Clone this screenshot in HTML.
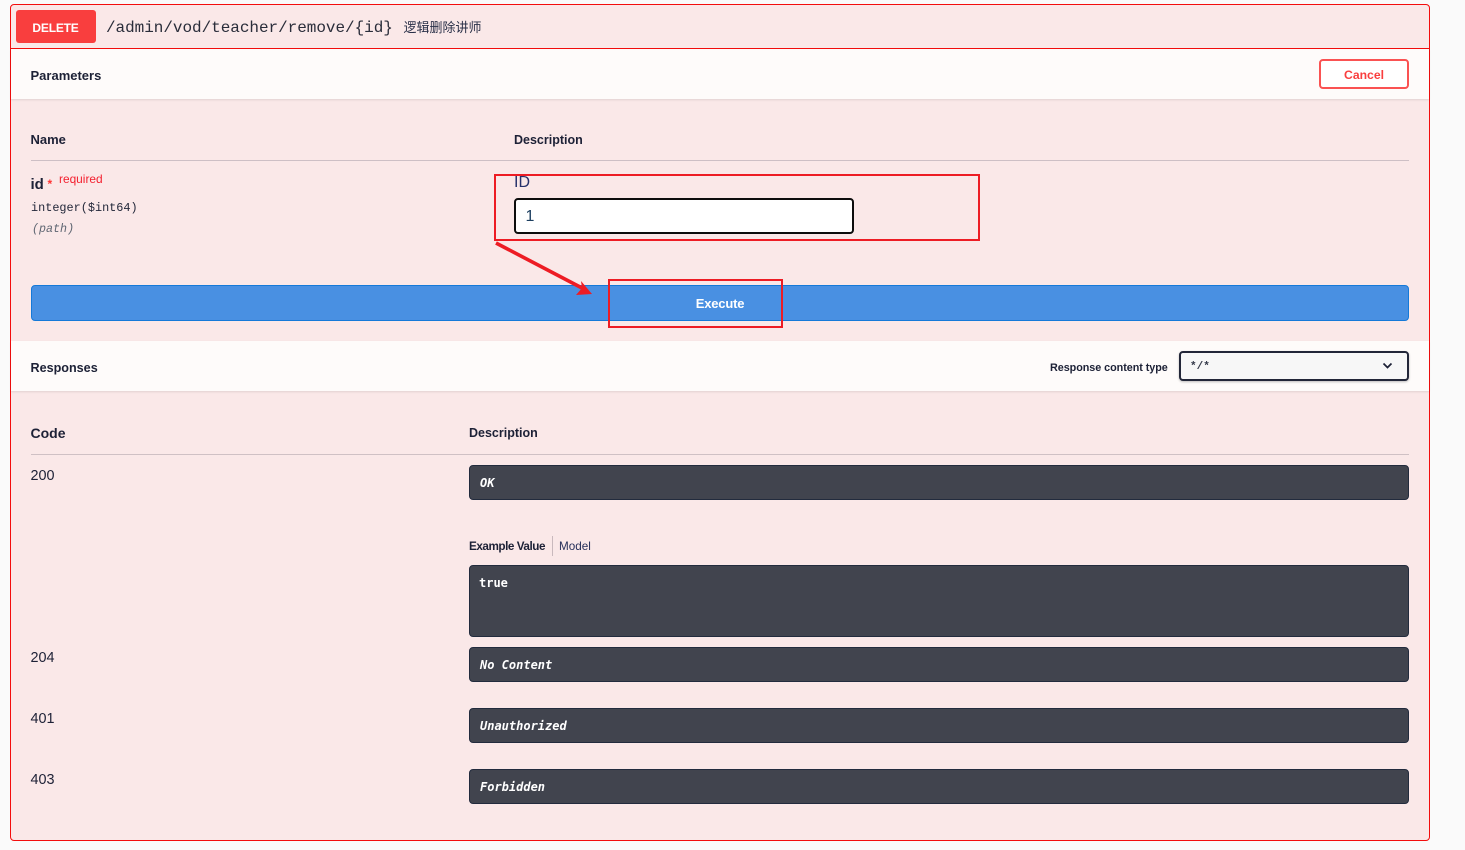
<!DOCTYPE html>
<html><head><meta charset="utf-8"><style>
html,body{margin:0;padding:0;width:1465px;height:850px;overflow:hidden;background:#fafafa}
body{position:relative;font-family:"Liberation Sans","Noto Sans CJK SC",sans-serif;color:#1b1f33}
.a{position:absolute;box-sizing:border-box;white-space:nowrap}
.t{position:absolute;white-space:nowrap;line-height:16px}
.b{font-weight:bold;font-size:12.5px;color:#1d2136}
.m{font-family:"Liberation Mono",monospace}
.dark{position:absolute;box-sizing:border-box;left:469px;width:940px;background:#41444e;border:1px solid #222b3d;border-radius:4px}
.dt{position:absolute;left:480px;font-family:"DejaVu Sans Mono","Liberation Mono",monospace;font-size:12px;font-weight:bold;font-style:italic;color:#fff;white-space:nowrap;line-height:16px}
.code{position:absolute;left:30.5px;font-size:14.4px;line-height:16px;color:#1d2136}
</style></head><body>
<div class="a" style="left:10px;top:4px;width:1420px;height:837px;background:#fae8e8;border:1px solid #f30d0d;border-radius:4px"></div>
<div class="a" style="left:11px;top:48px;width:1418px;height:1px;background:#f30d0d"></div>
<div class="a" style="left:16px;top:10px;width:80px;height:33px;background:#f93e3e;border-radius:3px"></div>
<div class="t" style="left:16px;width:79px;top:20px;text-align:center;color:#fff;font-weight:bold;font-size:12px;letter-spacing:-.2px">DELETE</div>
<div class="t m" style="left:106px;top:20px;font-size:16px;letter-spacing:-.04px;color:#2a2d3a">/admin/vod/teacher/remove/{id}</div>
<div class="t" style="left:403.5px;top:20px;font-size:13px;color:#2a3048">逻辑删除讲师</div>

<div class="a" style="left:11px;top:49px;width:1418px;height:50px;background:#fefbfa;box-shadow:0 1px 2px rgba(0,0,0,.1)"></div>
<div class="t b" style="left:30.5px;top:68px;font-size:13px">Parameters</div>
<div class="a" style="left:1319px;top:59px;width:90px;height:30px;border:2px solid #fa5252;border-radius:4px;background:#fff"></div>
<div class="t" style="left:1319px;width:90px;top:67px;text-align:center;font-weight:bold;font-size:12.2px;color:#f93e3e">Cancel</div>

<div class="t b" style="left:30.5px;top:132px;font-size:13px">Name</div>
<div class="t b" style="left:514px;top:132px">Description</div>
<div class="a" style="left:31px;top:160px;width:1378px;height:1px;background:#cdbfc5"></div>
<div class="t" style="left:30.5px;top:177px;font-weight:bold;font-size:15px;color:#1d2136">id</div>
<div class="t" style="left:47.5px;top:176px;font-size:12px;font-weight:bold;color:#f33">*</div>
<div class="t" style="left:59px;top:171px;font-size:11.9px;color:#f3202f">required</div>
<div class="t m" style="left:31px;top:200px;font-size:11.85px;color:#23283a">integer($int64)</div>
<div class="t m" style="left:32px;top:221px;font-size:11.7px;font-style:italic;color:#5f6672">(path)</div>
<div class="t" style="left:514px;top:175px;font-size:16px;color:#26306a">ID</div>
<div class="a" style="left:514px;top:198px;width:340px;height:36px;background:#fff;border:2px solid #0d0d0d;border-radius:4px"></div>
<div class="t" style="left:525.5px;top:209px;font-size:16px;color:#1d3f60">1</div>

<div class="a" style="left:31px;top:285px;width:1378px;height:36px;background:#4990e2;border:1px solid #1579d8;border-radius:4px"></div>
<div class="t" style="left:31px;width:1378px;top:296px;text-align:center;color:#fff;font-weight:bold;font-size:13px;letter-spacing:-.2px">Execute</div>

<div class="a" style="left:11px;top:341px;width:1418px;height:50px;background:#fefbfa;box-shadow:0 1px 2px rgba(0,0,0,.1)"></div>
<div class="t b" style="left:30.5px;top:360px;font-size:12.6px">Responses</div>
<div class="t b" style="left:1050px;top:360px;font-size:10.8px;letter-spacing:-.05px">Response content type</div>
<div class="a" style="left:1179px;top:351px;width:230px;height:30px;background:#f7f7f7;border:2px solid #222638;border-radius:4px;box-shadow:0 1px 2px rgba(0,0,0,.25)"></div>
<div class="t m" style="left:1190px;top:359px;font-size:11px;font-weight:bold;color:#333848">*/*</div>
<svg class="a" style="left:1381px;top:361px" width="13" height="10" viewBox="0 0 13 10"><path d="M2.5 2.5 L6.5 6.5 L10.5 2.5" fill="none" stroke="#1d2136" stroke-width="1.7"/></svg>

<div class="t" style="left:30.5px;top:425px;font-weight:bold;font-size:14px;color:#1d2136">Code</div>
<div class="t b" style="left:469px;top:425px">Description</div>
<div class="a" style="left:31px;top:454px;width:1378px;height:1px;background:#cfc0c4"></div>

<div class="code" style="top:468px">200</div>
<div class="dark" style="top:465px;height:35px"></div>
<div class="dt" style="top:475px">OK</div>
<div class="t b" style="left:469px;top:539px;font-size:11.7px;letter-spacing:-.45px">Example Value</div>
<div class="a" style="left:552px;top:536px;width:1px;height:20px;background:#c9b9bd"></div>
<div class="t" style="left:559px;top:539px;font-size:11.7px;color:#27305a">Model</div>
<div class="dark" style="top:565px;height:72px"></div>
<div class="t" style="left:479px;top:575px;font-family:'DejaVu Sans Mono',monospace;font-size:12px;font-weight:bold;color:#fff">true</div>

<div class="code" style="top:650px">204</div>
<div class="dark" style="top:647px;height:35px"></div>
<div class="dt" style="top:657px">No Content</div>

<div class="code" style="top:711px">401</div>
<div class="dark" style="top:708px;height:35px"></div>
<div class="dt" style="top:718px">Unauthorized</div>

<div class="code" style="top:772px">403</div>
<div class="dark" style="top:769px;height:35px"></div>
<div class="dt" style="top:779px">Forbidden</div>

<div class="a" style="left:494px;top:174px;width:486px;height:67px;border:2px solid #ed1c24"></div>
<div class="a" style="left:608px;top:279px;width:175px;height:49px;border:2px solid #ed1c24"></div>
<svg class="a" style="left:490px;top:238px" width="110" height="62" viewBox="0 0 110 62"><path d="M6 5 L92 50" stroke="#ed1c24" stroke-width="3.6" fill="none"/><path d="M102 56 L86 57 L92 50 L91 43 Z" fill="#ed1c24"/></svg>
</body></html>
